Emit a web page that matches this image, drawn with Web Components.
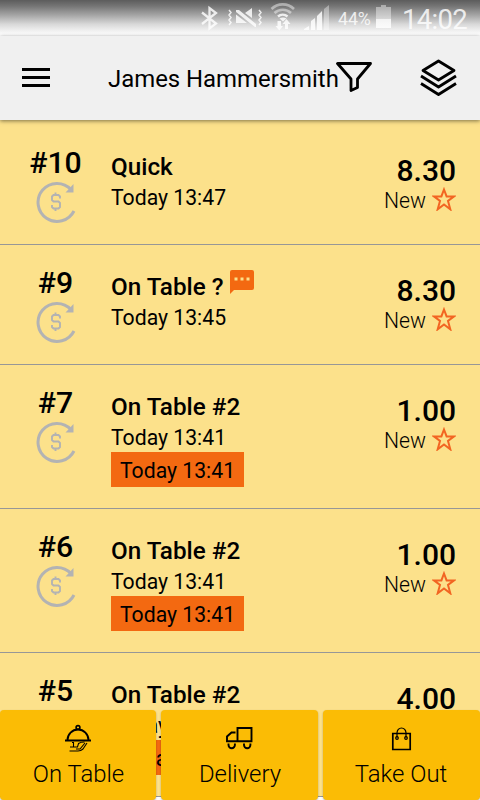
<!DOCTYPE html>
<html lang="en">
<head>
<meta charset="utf-8">
<meta name="viewport" content="width=device-width">
<title>Orders</title>
<style>
  html, body { margin: 0; height: 100%; overflow: hidden; }
  body { font-family: Roboto, sans-serif; color: #000; background: #fff; }
</style>
</head>
<body>
<orders-app></orders-app>

<script>
class StatusBar extends HTMLElement {
  connectedCallback() {
    this.attachShadow({ mode: "open" });
    this.shadowRoot.innerHTML = `
      <style>
        :host {
          display: flex;
          justify-content: flex-end;
          height: 36px;
          background: linear-gradient(#5c5c5c, #757575 17%, #a5a5a5 42%, #d8d8d8 67%, #fff 96%);
          color: rgba(255, 255, 255, 0.82);
          line-height: 36px;
        }
        svg { width: 137px; height: 36px; flex: none; }
        .level { font-size: 17.800px; letter-spacing: -0.1px; width: 36px; margin-left: 1px; padding-top: 1px; }
        .battery { width: 21px; }
        .time { font-size: 27.500px; width: 66px; margin: 2px 12px 0 7px; letter-spacing: -0.7px; }
      </style>
      <svg viewBox="200 0 137 36" fill="currentColor">
        <path d="M202 12.500l14 11-6.500 5V8l6.500 5-14 11" fill="none" stroke="currentColor" stroke-width="2.300"/>
        <path d="M229 10l2 2.500-2 2.500 2 2.500-2 2.500 2 2.500-2 2.500M259 10l2 2.500-2 2.500 2 2.500-2 2.500 2 2.500-2 2.500" fill="none" stroke="currentColor" stroke-width="1.500"/>
        <path d="M236 10h3l17 14v3h-1l-19-15zM236 14.500l11 8.500h-11zM245 13l7-5v10z"/>
        <g fill="none" stroke="currentColor">
          <path d="M271.500 9a16 16 0 0 1 22.500 0M274.500 13a12 12 0 0 1 16.500 0" stroke-width="2.600" opacity=".55"/>
          <path d="M278 16.500a7 7 0 0 1 9.500 0" stroke-width="2.400"/>
        </g>
        <path d="M279.500 18.500q3.500-2 7 0l-3.500 3zM277.500 21h3.500v5h2l-3.700 4.500-3.800-4.500h2zM285 29v-5h-2.500l4-5 4 5H288v5z"/>
        <path d="M304 30v-1l5-3v4zM311 30v-9l4-3v12zM317 30V16l5-5v19z"/>
        <path d="M324 30V9l5-4v25z" opacity=".45"/>
      </svg>
      <div class="level">44%</div>
      <svg class="battery" viewBox="374 0 21 36" fill="currentColor">
        <path d="M376 7h5V5h5v2h5v12h-15z" opacity=".5"/>
        <path d="M376 19h15v9h-15z"/>
      </svg>
      <div class="time">14:02</div>
    `;
  }
}

class TopBar extends HTMLElement {
  connectedCallback() {
    this.attachShadow({ mode: "open" });
    this.shadowRoot.innerHTML = `
      <style>
        :host {
          display: flex;
          align-items: center;
          height: 84px;
          box-sizing: border-box;
          padding: 0 23px 2px 22px;
          background: #f0f0f0;
          box-shadow: 0 1px 4px rgba(0, 0, 0, 0.5);
          position: relative;
          z-index: 1;
        }
        svg { flex: none; display: block; fill: none; stroke: #000; }
        .title {
          width: 228px;
          margin-left: 58px;
          padding-top: 3px;
          font-size: 23.900px;
          white-space: nowrap;
        }
        .layers { margin-left: auto; }
      </style>
      <svg width="28" height="24" viewBox="0 0 28 24" stroke-width="3">
        <path d="M0 4.500h28M0 12.500h28M0 20.500h28"/>
      </svg>
      <div class="title"><slot></slot></div>
      <svg width="36" height="30" viewBox="0 0 36 30" stroke-width="2.800" stroke-linejoin="round">
        <path d="M1.500 1.500h33L21.500 17v8.500L15 28.500V17z"/>
      </svg>
      <svg class="layers" width="37" height="38" viewBox="0 0 37 38" stroke-width="2.800" stroke-linejoin="round">
        <path d="M18.500 3l15.500 9.500-15.500 9.500L3 12.500z"/>
        <path d="M1 18l17.500 11L36 18M1 25.500l17.500 11L36 25.500"/>
      </svg>
    `;
  }
}

class OrderRow extends HTMLElement {
  connectedCallback() {
    const due = this.getAttribute("due");
    const comment = this.hasAttribute("comment");
    this.attachShadow({ mode: "open" });
    this.shadowRoot.innerHTML = `
      <style>
        :host {
          display: grid;
          grid-template-columns: 111px 1fr 100px;
          height: ${due ? 144 : 120}px;
          box-sizing: border-box;
          padding-right: 24px;
          border-bottom: 1px solid #979797;
          background: #fce18b;
          overflow: hidden;
        }
        :host(:first-child) { height: 125px; padding-top: 5px; }
        svg { display: block; flex: none; }
        .number { width: 111px; text-align: center; font-size: 30.200px; font-weight: 500; line-height: 36px; padding-top: 20px; }
        .repeat { margin: 0 auto 0 36px; }
        .name { display: flex; gap: 6px; font-size: 24.250px; font-weight: 500; line-height: 30px; padding-top: 27px; }
        .bubble { margin-top: -2px; }
        .date { font-size: 21.200px; line-height: 30px; margin-top: 1px; }
        .due {
          width: max-content;
          height: 35px;
          box-sizing: border-box;
          margin-top: -1px;
          padding: 0 9px;
          background: #f36911;
          font-size: 21.200px;
          line-height: 38px;
        }
        .side { text-align: right; }
        .price { font-size: 30px; font-weight: 500; line-height: 36px; padding-top: 28px; }
        .state { display: flex; justify-content: flex-end; gap: 6px; font-size: 21.200px; font-weight: 300; line-height: 26px; margin-top: -1px; }
        .star { margin-top: -1px; }
      </style>
      <div>
        <div class="number">#${this.getAttribute("number")}</div>
        <svg class="repeat" width="42" height="42" viewBox="0 0 42 42" fill="none" stroke="#b3b3b3">
          <path d="M35 8.500A19 19 0 1 0 38 30" stroke-width="3"/>
          <path d="M37.500 3v8.500h-8z" fill="#b3b3b3" stroke="none"/>
          <path d="M24 17.500v-2l-1.500-1.500h-5L16 15.500v3.500l1.500 1.500h5L24 22v4l-1.500 1.500h-5L16 26v-2M19.500 11.500V14M19.500 27.500v2.500" stroke-width="1.900"/>
        </svg>
      </div>
      <div>
        <div class="name">
          <slot></slot>
          ${comment ? `<svg class="bubble" width="24" height="24" viewBox="0 0 24 24">
            <path d="M2 0h20a2 2 0 0 1 2 2v16a2 2 0 0 1-2 2H4l-4 4V2a2 2 0 0 1 2-2z" fill="#f36911"/>
            <path d="M4.500 7.500h3v3h-3zM10.500 7.500h3v3h-3zM16.500 7.500h3v3h-3z" fill="#fce18b"/>
          </svg>` : ""}
        </div>
        <div class="date">${this.getAttribute("date")}</div>
        ${due ? `<div class="due">${due}</div>` : ""}
      </div>
      <div class="side">
        <div class="price">${this.getAttribute("price")}</div>
        <div class="state">
          New
          <svg class="star" width="24" height="24" viewBox="0 0 24 24" fill="none" stroke="#f26522" stroke-width="2">
            <path d="M12 2.500l2.600 6.900h7.400l-6 4.600 2.300 8.300L12 17.500l-6.300 4.800L8 14 2 9.400h7.400z"/>
          </svg>
        </div>
      </div>
    `;
  }
}

class ActionButton extends HTMLElement {
  connectedCallback() {
    this.attachShadow({ mode: "open" });
    this.shadowRoot.innerHTML = `
      <style>
        :host {
          display: flex;
          flex-direction: column;
          align-items: center;
          box-sizing: border-box;
          height: 90px;
          padding-top: 14px;
          border-radius: 4px;
          background: #fbbc05;
          box-shadow: 0 1px 2px rgba(0, 0, 0, 0.3);
          font-size: 23.900px;
          font-weight: 300;
          line-height: 28px;
        }
        .label { margin-top: 8px; padding-left: 1px; }
        :host(:last-child) .label { padding: 0 1px 0 0; }
        ::slotted(svg) { display: block; width: 28px; height: 28px; fill: none; stroke: #000; }
      </style>
      <slot name="icon"></slot>
      <div class="label"><slot></slot></div>
    `;
  }
}

class OrdersApp extends HTMLElement {
  connectedCallback() {
    this.attachShadow({ mode: "open" });
    this.shadowRoot.innerHTML = `
      <style>
        :host { display: flex; flex-direction: column; height: 800px; width: 480px; position: relative; overflow: hidden; }
        status-bar, top-bar { flex: none; }
        .list { flex: 1; min-height: 0; overflow: hidden; }
        .actions {
          position: absolute;
          left: 0;
          right: 0;
          bottom: 0;
          display: grid;
          grid-template-columns: 156px 157px 157px;
          justify-content: space-between;
          z-index: 2;
        }
      </style>
      <status-bar></status-bar>
      <top-bar>James Hammersmith</top-bar>
      <div class="list">
        <order-row number="10" date="Today 13:47" price="8.30">Quick</order-row>
        <order-row number="9" date="Today 13:45" price="8.30" comment>On Table ?</order-row>
        <order-row number="7" date="Today 13:41" price="1.00" due="Today 13:41">On Table #2</order-row>
        <order-row number="6" date="Today 13:41" price="1.00" due="Today 13:41">On Table #2</order-row>
        <order-row number="5" date="Today 13:41" price="4.00" due="Today 13:41">On Table #2</order-row>
      </div>
      <div class="actions">
        <action-button>
          <svg slot="icon" viewBox="0 0 28 28">
            <path d="M3.500 16a10.500 10.500 0 0 1 21 0M1 16.500h26" stroke-width="1.900"/>
            <circle cx="14" cy="3.500" r="1.900" stroke-width="1.600"/>
            <path d="M8 18.500h1.500v4.500H6M10 23h3.500l1-3.500q2-1.500 6-1.500M5.500 27h8.500q3 0 5-2l4-6M12 25h4l5-6" stroke-width="1.100"/>
          </svg>
          On Table
        </action-button>
        <action-button>
          <svg slot="icon" viewBox="1 0 28 28" stroke-width="1.900">
            <path d="M12.500 4h14v13.200h-14zM12.500 17.200H2V12.500L6.500 8.500h4"/>
            <path d="M3.500 19.500v1.500a3.200 3.200 0 0 0 6.400 0v-1.500M19 19.500v1.500a3.200 3.200 0 0 0 6.400 0v-1.500"/>
          </svg>
          Delivery
        </action-button>
        <action-button>
          <svg slot="icon" viewBox="0.5 0 28 28" stroke-width="1.700">
            <path d="M5.300 9.500h17.400v16H5.300z"/>
            <path d="M9.500 13.500V9a4.500 5 0 0 1 9 0v4.500" stroke-width="1.200"/>
            <circle cx="9.500" cy="14" r="1.300" stroke-width="1.200"/>
            <circle cx="18.500" cy="14" r="1.300" stroke-width="1.200"/>
          </svg>
          Take Out
        </action-button>
      </div>
    `;
  }
}

customElements.define("status-bar", StatusBar);
customElements.define("top-bar", TopBar);
customElements.define("order-row", OrderRow);
customElements.define("action-button", ActionButton);
customElements.define("orders-app", OrdersApp);
</script>
</body>
</html>
